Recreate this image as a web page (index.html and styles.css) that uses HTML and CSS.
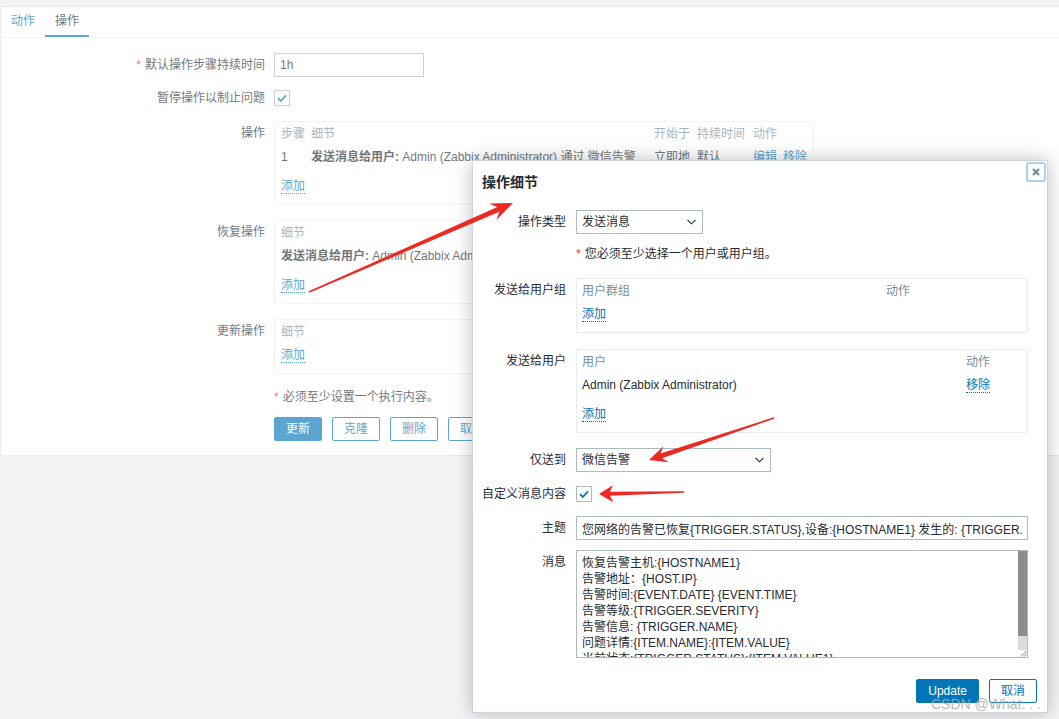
FILE: index.html
```html
<!DOCTYPE html>
<html lang="zh-CN">
<head>
<meta charset="utf-8">
<title>操作</title>
<link rel="stylesheet" href="styles.css">
</head>
<body>
<div class="page">
  <div class="panel">
    <div class="tabs">
      <span class="tab">动作</span>
      <span class="tab tab-active">操作</span>
    </div>
    <div class="form">
      <div class="row">
        <div class="lbl"><span class="req">*</span>默认操作步骤持续时间</div>
        <div class="ctl"><input class="input input-short" type="text" value="1h" readonly></div>
      </div>
      <div class="row row-check">
        <div class="lbl">暂停操作以制止问题</div>
        <div class="ctl ctl-check">
          <span class="checkbox"><svg width="14" height="14" viewBox="0 0 14 14"><path d="M3 7.2 L5.8 10 L11 4.4" fill="none" stroke="#0275b8" stroke-width="1.8"/></svg></span>
        </div>
      </div>
      <div class="row">
        <div class="lbl">操作</div>
        <div class="ctl">
          <div class="box box-page">
            <div class="ops-grid head"><span>步骤</span><span>细节</span><span>开始于</span><span>持续时间</span><span>动作</span></div>
            <div class="ops-grid data"><span>1</span><span><b>发送消息给用户:</b> Admin (Zabbix Administrator) 通过 微信告警</span><span>立即地</span><span>默认</span><span><a class="link">编辑</a><a class="link link-next">移除</a></span></div>
            <div class="add"><a class="link">添加</a></div>
          </div>
        </div>
      </div>
      <div class="row">
        <div class="lbl">恢复操作</div>
        <div class="ctl">
          <div class="box box-page">
            <div class="head">细节</div>
            <div class="data"><b>发送消息给用户:</b> Admin (Zabbix Administrator) 通过 微信告警</div>
            <div class="add"><a class="link">添加</a></div>
          </div>
        </div>
      </div>
      <div class="row">
        <div class="lbl">更新操作</div>
        <div class="ctl">
          <div class="box box-page">
            <div class="head">细节</div>
            <div class="add"><a class="link">添加</a></div>
          </div>
        </div>
      </div>
      <div class="row">
        <div class="lbl"></div>
        <div class="ctl note"><span class="req">*</span>必须至少设置一个执行内容。</div>
      </div>
      <div class="row row-actions">
        <div class="lbl"></div>
        <div class="ctl actions">
          <button class="btn">更新</button>
          <button class="btn btn-alt">克隆</button>
          <button class="btn btn-alt">删除</button>
          <button class="btn btn-alt">取消</button>
        </div>
      </div>
    </div>
  </div>
</div>

<div class="overlay"></div>

<div class="dialog">
  <div class="dlg-head">操作细节</div>
  <button class="dlg-close"><svg width="10" height="10" viewBox="0 0 10 10"><path d="M2 2 L8 8 M8 2 L2 8" stroke="#768d99" stroke-width="2.2"/></svg></button>
  <div class="dlg-body">
    <div class="drow d-first">
      <div class="lbl">操作类型</div>
      <div class="ctl"><div class="select sel-type"><span>发送消息</span><svg width="9" height="6" viewBox="0 0 9 6"><path d="M0.5 0.8 L4.5 4.8 L8.5 0.8" fill="none" stroke="#1f2c33" stroke-width="1.1"/></svg></div></div>
    </div>
    <div class="drow d-note">
      <div class="lbl-empty"></div>
      <div class="ctl note"><span class="req">*</span>您必须至少选择一个用户或用户组。</div>
    </div>
    <div class="drow d-box">
      <div class="lbl">发送给用户组</div>
      <div class="ctl">
        <div class="box box-dlg">
          <div class="grp-grid head"><span>用户群组</span><span>动作</span></div>
          <div class="add"><a class="link">添加</a></div>
        </div>
      </div>
    </div>
    <div class="drow d-box">
      <div class="lbl">发送给用户</div>
      <div class="ctl">
        <div class="box box-dlg">
          <div class="usr-grid head"><span>用户</span><span>动作</span></div>
          <div class="usr-grid data"><span>Admin (Zabbix Administrator)</span><span><a class="link">移除</a></span></div>
          <div class="add"><a class="link">添加</a></div>
        </div>
      </div>
    </div>
    <div class="drow d-sep">
      <div class="lbl">仅送到</div>
      <div class="ctl"><div class="select sel-media"><span>微信告警</span><svg width="9" height="6" viewBox="0 0 9 6"><path d="M0.5 0.8 L4.5 4.8 L8.5 0.8" fill="none" stroke="#1f2c33" stroke-width="1.1"/></svg></div></div>
    </div>
    <div class="drow">
      <div class="lbl">自定义消息内容</div>
      <div class="ctl ctl-check24">
        <span class="checkbox"><svg width="14" height="14" viewBox="0 0 14 14"><path d="M3 7.2 L5.8 10 L11 4.4" fill="none" stroke="#0275b8" stroke-width="1.8"/></svg></span>
      </div>
    </div>
    <div class="drow">
      <div class="lbl">主题</div>
      <div class="ctl"><input class="input input-wide" type="text" value="您网络的告警已恢复{TRIGGER.STATUS},设备:{HOSTNAME1} 发生的: {TRIGGER.NAME},已恢复!" readonly></div>
    </div>
    <div class="drow">
      <div class="lbl">消息</div>
      <div class="ctl">
        <div class="textarea">
          <div class="ta-text">恢复告警主机:{HOSTNAME1}
告警地址：{HOST.IP}
告警时间:{EVENT.DATE} {EVENT.TIME}
告警等级:{TRIGGER.SEVERITY}
告警信息: {TRIGGER.NAME}
问题详情:{ITEM.NAME}:{ITEM.VALUE}
当前状态:{TRIGGER.STATUS}:{ITEM.VALUE1}
事件ID:{EVENT.ID}</div>
          <div class="ta-bar">
            <div class="ta-thumb"></div>
            <div class="ta-corner"><svg width="9" height="7" viewBox="0 0 9 7"><path d="M3 6.5 L8.5 1 M6 6.5 L8.5 4" stroke="#6f7a80" stroke-width="0.9"/></svg></div>
          </div>
        </div>
      </div>
    </div>
  </div>
  <div class="dlg-foot">
    <button class="btn">Update</button>
    <button class="btn btn-alt">取消</button>
  </div>
</div>

<svg class="arrows" width="1059" height="719" viewBox="0 0 1059 719">
  <polygon fill="#ec2a23" points="309.3,292.7 499.3,211.7 496.4,220.1 513,203 489.2,203.6 497.3,207.1 308.7,291.3"/>
  <polygon fill="#ec2a23" points="773.8,417.3 660.5,453.5 663.4,446.2 649,460 668.8,462.3 662.1,458.2 774.2,418.7"/>
  <polygon fill="#ec2a23" points="684,491.2 610,491.7 612.8,485.2 599,494 613.2,502.2 610,495.7 684,492.8"/>
</svg>

<div class="watermark">CSDN @What. . .</div>
</body>
</html>
```

FILE: styles.css
```css
* {
  box-sizing: border-box;
}

body {
  margin: 0;
  width: 1059px;
  height: 719px;
  overflow: hidden;
  position: relative;
  background: #ebeef0;
  font-family: "Liberation Sans", Arial, "Noto Sans CJK SC", sans-serif;
  font-size: 12px;
  line-height: 16px;
  color: #1f2c33;
}

.page {
  padding-top: 6px;
}

.panel {
  background: #fff;
  border: 1px solid #dfe4e7;
  border-right: 0;
  padding-bottom: 14px;
}

.tabs {
  display: flex;
  height: 31px;
  border-bottom: 1px solid #ebeef0;
}

.tab {
  height: 30px;
  padding: 0 10px;
  line-height: 28px;
  border-bottom: 2px solid transparent;
  color: #0275b8;
}

.tab-active {
  color: #1f2c33;
  border-bottom-color: #0275b8;
}

.row {
  display: grid;
  grid-template-columns: 264px 1fr;
  column-gap: 9px;
  margin-top: 15px;
}

.row-check {
  margin-top: 9px;
}

.row-actions {
  margin-top: 12px;
}

.lbl {
  text-align: right;
  padding-top: 4px;
  line-height: 16px;
  white-space: nowrap;
}

.req {
  color: #e33734;
  margin-right: 4px;
}

.note {
  line-height: 16px;
  white-space: nowrap;
}

.input {
  display: block;
  height: 24px;
  border: 1px solid #acbbc2;
  padding: 0 5px;
  font: inherit;
  color: #1f2c33;
  background: #fff;
  outline: none;
  margin: 0;
}

.input-short {
  width: 150px;
}

.input-wide {
  width: 452px;
}

.ctl-check {
  height: 20px;
  padding-top: 4px;
}

.ctl-check24 {
  height: 24px;
  padding-top: 4px;
}

.checkbox {
  display: block;
  width: 16px;
  height: 16px;
  border: 1px solid #acbbc2;
  background: #fff;
}

.checkbox svg {
  display: block;
}

.box {
  border: 1px solid #ebeef0;
  background: #fff;
}

.box-page {
  width: 540px;
  padding: 0 6px 7px;
}

.box-dlg {
  width: 452px;
  padding: 0 5px 7px;
}

.head {
  height: 24px;
  line-height: 24px;
  color: #768d99;
}

.data {
  height: 22px;
  line-height: 22px;
  margin-bottom: 7px;
  white-space: nowrap;
}

.add {
  height: 22px;
  line-height: 22px;
}

.link {
  color: #0275b8;
  border-bottom: 1px dotted #0275b8;
  text-decoration: none;
}

.link-next {
  margin-left: 6px;
}

.ops-grid {
  display: grid;
  grid-template-columns: 30px 343px 43px 56px 1fr;
}

.grp-grid {
  display: grid;
  grid-template-columns: 304px 1fr;
}

.usr-grid {
  display: grid;
  grid-template-columns: 384px 1fr;
}

.actions {
  display: flex;
  gap: 10px;
}

.btn {
  height: 24px;
  padding: 0 11px;
  border: 1px solid #0275b8;
  border-radius: 2px;
  background: #0275b8;
  color: #fff;
  font: inherit;
  line-height: 22px;
  margin: 0;
}

.btn-alt {
  background: #fff;
  color: #0275b8;
}

.overlay {
  position: absolute;
  left: 0;
  top: 0;
  width: 1059px;
  height: 719px;
  background: rgba(255, 255, 255, 0.35);
  z-index: 10;
}

.dialog {
  position: absolute;
  left: 472px;
  top: 160px;
  width: 576px;
  height: 553px;
  background: #fff;
  border: 1px solid #ccd5d9;
  box-shadow: 0 0 18px rgba(0, 0, 0, 0.25);
  z-index: 20;
  padding: 0 19px 0 9px;
}

.dlg-head {
  padding-top: 12px;
  font-size: 14px;
  line-height: 18px;
  font-weight: bold;
}

.dlg-close {
  position: absolute;
  top: 1px;
  right: 1px;
  width: 20px;
  height: 20px;
  padding: 0;
  border: 2px solid #a9d1ee;
  border-radius: 3px;
  background: #fff;
  display: flex;
  align-items: center;
  justify-content: center;
}

.dlg-close svg {
  display: block;
}

.drow {
  display: grid;
  grid-template-columns: 84px 452px;
  column-gap: 10px;
  margin-top: 10px;
}

.d-first {
  margin-top: 19px;
}

.d-note {
  margin-top: 12px;
}

.d-box {
  margin-top: 16px;
}

.d-sep {
  margin-top: 15px;
}

.select {
  display: flex;
  align-items: center;
  justify-content: space-between;
  height: 24px;
  border: 1px solid #acbbc2;
  padding: 0 6px 0 5px;
  background: #fff;
}

.select svg {
  display: block;
}

.sel-type {
  width: 127px;
}

.sel-media {
  width: 195px;
}

.textarea {
  display: flex;
  width: 452px;
  height: 108px;
  border: 1px solid #acbbc2;
  background: #fff;
}

.ta-text {
  flex: 1;
  padding: 4px 5px;
  line-height: 16px;
  white-space: pre;
  overflow: hidden;
}

.ta-bar {
  width: 9px;
  display: flex;
  flex-direction: column;
  background: #d9dde0;
}

.ta-thumb {
  height: 85px;
  background: #8d8d8d;
}

.ta-corner {
  margin-top: auto;
  height: 7px;
  background: #fff;
}

.ta-corner svg {
  display: block;
}

.dlg-foot {
  display: flex;
  justify-content: flex-end;
  gap: 10px;
  margin-top: 21px;
  margin-right: -9px;
}

.arrows {
  position: absolute;
  left: 0;
  top: 0;
  z-index: 30;
  pointer-events: none;
}

.watermark {
  position: absolute;
  left: 931px;
  top: 695px;
  font-size: 14px;
  line-height: 18px;
  color: rgba(170, 170, 170, 0.85);
  z-index: 40;
  white-space: nowrap;
}
```
